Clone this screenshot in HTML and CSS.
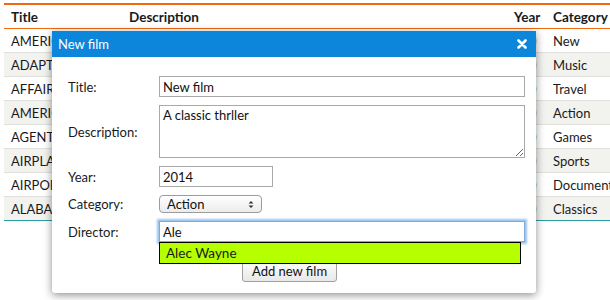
FILE: index.html
```html
<!DOCTYPE html>
<html lang="en">
  <head>
    <meta charset="utf-8">
    <title>Films</title>
    <link rel="stylesheet" href="styles.css">
  </head>
  <body>
    <table class="films">
      <colgroup>
        <col class="c-title"> <col class="c-desc"> <col class="c-year"> <col class="c-cat">
      </colgroup>
      <thead>
        <tr> <th>Title</th> <th>Description</th> <th>Year</th> <th>Category</th> </tr>
      </thead>
      <tbody>
        <tr> <td>AMERICAN</td> <td>A thoughtful story</td> <td><span class="year">2006</span></td> <td>New</td> </tr>
        <tr> <td>ADAPTATION</td> <td>A fast-paced drama</td> <td><span class="year">2006</span></td> <td>Music</td> </tr>
        <tr> <td>AFFAIR</td> <td>A lacklusture display</td> <td><span class="year">2006</span></td> <td>Travel</td> </tr>
        <tr> <td>AMERICAN</td> <td>A beautiful story</td> <td><span class="year">2006</span></td> <td>Action</td> </tr>
        <tr> <td>AGENT</td> <td>A boring epistle</td> <td><span class="year">2006</span></td> <td>Games</td> </tr>
        <tr> <td>AIRPLANE</td> <td>An intrepid yarn</td> <td><span class="year">2006</span></td> <td>Sports</td> </tr>
        <tr> <td>AIRPORT</td> <td>A touching drama</td> <td><span class="year">2006</span></td> <td>Documentary</td> </tr>
        <tr> <td>ALABAMA</td> <td>A thrilling panorama</td> <td><span class="year">2006</span></td> <td>Classics</td> </tr>
      </tbody>
    </table>

    <div class="dialog">
      <div class="dialog-bar">
        <span>New film</span>
        <svg class="close" width="10" height="10" viewBox="0 0 10 10">
          <path d="M1.5 1.5 L8.5 8.5 M8.5 1.5 L1.5 8.5" stroke="#fff" stroke-width="2.6" stroke-linecap="round"/>
        </svg>
      </div>
      <form class="dialog-body">
        <label for="title">Title:</label>
        <input id="title" type="text" value="New film">

        <label for="desc">Description:</label>
        <textarea id="desc">A classic thrller</textarea>

        <label for="year">Year:</label>
        <input id="year" class="short" type="text" value="2014">

        <label for="cat">Category:</label>
        <div class="select">
          <select id="cat">
            <option>Action</option>
          </select>
          <svg class="arrows" width="6" height="9" viewBox="0 0 6 9">
            <path d="M0.5 3.5 L3 1 L5.5 3.5 Z M0.5 5.5 L3 8 L5.5 5.5 Z" fill="#333"/>
          </svg>
        </div>

        <label for="director">Director:</label>
        <div class="field">
          <input id="director" class="focused" type="text" value="Ale">
          <ul class="suggest">
            <li>Alec Wayne</li>
          </ul>
        </div>

        <div class="actions">
          <button type="button">Add new film</button>
        </div>
      </form>
    </div>
  </body>
</html>
```

FILE: styles.css
```css
body {
  margin: 0;
  overflow: hidden;
  font-family: Lato, "Liberation Sans", sans-serif;
  font-size: 13px;
  color: #1a1a1a;
}

.films {
  border-collapse: collapse;
  table-layout: fixed;
  width: 660px;
  margin: 3px 0 0 4px;
  border-top: 2px solid #f26a0f;
  border-bottom: 1px solid #2c9ca4;
  white-space: nowrap;
}

.c-title { width: 118px; }
.c-desc { width: 385px; }
.c-year { width: 39px; }
.c-cat { width: 118px; }

.films th {
  text-align: left;
  font-weight: bold;
  font-size: 13.5px;
  height: 23px;
  padding: 0 7px;
  border-bottom: 1px solid #f26a0f;
}

.films td {
  height: 23px;
  padding: 0 7px;
  overflow: hidden;
  border-top: 1px solid #dfdfdc;
}

.year {
  display: block;
  width: 23px;
  overflow: hidden;
  color: #888;
}

.films tbody tr:first-child td {
  border-top: none;
}

.films tbody tr:nth-child(even) {
  background: #f2f2ef;
}

.dialog {
  position: absolute;
  left: 52px;
  top: 31px;
  width: 484px;
  height: 262px;
  background: #fff;
  border-radius: 0 0 3px 3px;
  box-shadow: 0 2px 9px rgba(0, 0, 0, 0.45);
}

.dialog-bar {
  display: flex;
  align-items: center;
  justify-content: space-between;
  height: 26px;
  padding: 0 9px 0 6px;
  background: #0b86da;
  color: #fff;
}

.dialog-body {
  display: grid;
  grid-template-columns: 91px 1fr;
  grid-template-rows: 21px 53px 21px 18px 21px auto;
  row-gap: 8px;
  align-items: center;
  padding: 19px 11px 0 16px;
}

input,
textarea,
select,
button {
  font-family: inherit;
  font-size: 13px;
  color: #111;
}

input,
textarea {
  box-sizing: border-box;
  width: 100%;
  margin: 0;
  border: 1px solid #a9a9a9;
  padding: 0 3px;
  outline: none;
}

input {
  height: 21px;
}

input.short {
  width: 114px;
}

textarea {
  height: 53px;
  padding-top: 1px;
  resize: vertical;
}

.select {
  position: relative;
  width: 103px;
  height: 18px;
}

.select select {
  appearance: none;
  box-sizing: border-box;
  width: 100%;
  height: 18px;
  margin: 0;
  padding: 0 0 0 7px;
  border: 1px solid #9c9c9c;
  border-radius: 4px;
  background: linear-gradient(#fff, #ececec);
}

.arrows {
  position: absolute;
  right: 8px;
  top: 5px;
}

.field {
  position: relative;
}

input.focused {
  border-color: #7fa9d8;
  box-shadow: 0 0 2px 2px #9cc3ec;
}

.suggest {
  position: absolute;
  left: 0;
  top: 21px;
  width: 362px;
  box-sizing: border-box;
  margin: 0;
  padding: 0 6px;
  list-style: none;
  background: #b5ff00;
  border: 1px solid #000;
  font-size: 13.5px;
  line-height: 20px;
  z-index: 1;
}

.actions {
  grid-column: 2;
  padding: 9px 0 12px 83px;
}

.actions button {
  height: 23px;
  padding: 0 9px;
  border: 1px solid #a0a0a0;
  border-radius: 3px;
  background: linear-gradient(#fff, #e8e8e8);
}
```
